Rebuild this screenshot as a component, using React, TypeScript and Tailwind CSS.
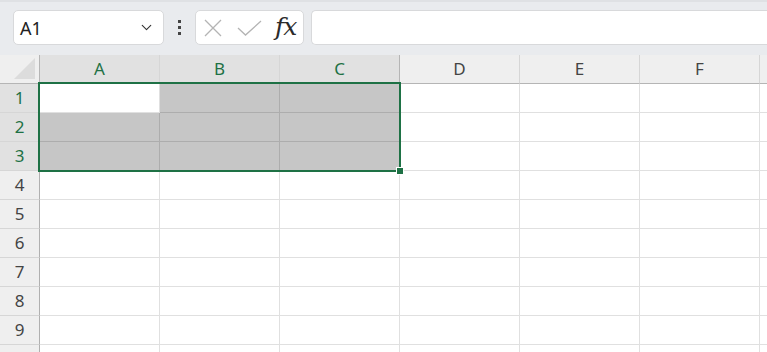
import { ChevronDown } from 'lucide-react';

const cols = ['A', 'B', 'C', 'D', 'E', 'F'];
const rows = [1, 2, 3, 4, 5, 6, 7, 8, 9];

const isSel = (r: number, c: number) => r <= 3 && c <= 2;

const App = () => {
  return (
    <div className="w-[767px] h-[352px] overflow-hidden bg-white font-['Noto_Sans',sans-serif]">
      {/* Toolbar */}
      <div className="h-[55px] bg-[#e9ebee] border-t-2 border-[#dfe1e4] flex items-start pt-[8px] pl-[13px]">
        <div className="w-[151px] h-[35px] bg-white rounded-[5px] border border-[#d8d9db] flex items-center pl-[6px] pr-[8px]">
          <span className="text-[18px] text-[#222] leading-none">A1</span>
          <ChevronDown className="ml-auto w-[17px] h-[17px] text-[#333]" strokeWidth={1.6} />
        </div>
        <div className="w-[31px] h-[35px] flex flex-col items-center justify-center gap-[3px]">
          <span className="w-[3px] h-[3px] bg-[#444]" />
          <span className="w-[3px] h-[3px] bg-[#444]" />
          <span className="w-[3px] h-[3px] bg-[#444]" />
        </div>
        <div className="w-[109px] h-[35px] bg-white rounded-[5px] border border-[#d8d9db] flex items-center pl-[8px]">
          <svg width="18" height="18" viewBox="0 0 18 18" className="shrink-0">
            <path d="M1 1 L17 17 M17 1 L1 17" stroke="#b4b4b4" strokeWidth="1.3" fill="none" />
          </svg>
          <svg width="25" height="16" viewBox="0 0 25 16" className="ml-[15px] shrink-0">
            <path d="M1 8 L8.5 15 L24 1" stroke="#b4b4b4" strokeWidth="1.3" fill="none" />
          </svg>
          <span className="ml-[13px] text-[25px] italic text-[#2b2b2b] font-['DejaVu_Serif',serif] leading-none -mt-[3px] tracking-[-1px]">
            fx
          </span>
        </div>
        <div className="ml-[7px] flex-1 h-[35px] bg-white rounded-l-[5px] border border-r-0 border-[#d8d9db]" />
      </div>

      {/* Grid */}
      <div className="relative">
        {/* Column headers */}
        <div className="flex h-[29px]">
          <div className="w-[40px] shrink-0 bg-[#efefef] border-r border-b border-[#b5b5b5] relative">
            <svg width="22" height="22" viewBox="0 0 22 22" className="absolute right-[3px] bottom-[3px]">
              <path d="M21 0 L21 21 L0 21 Z" fill="#dcdcdc" />
            </svg>
          </div>
          {cols.map((c, i) => (
            <div
              key={c}
              className={`w-[120px] shrink-0 flex items-center justify-center text-[17px] border-b ${
                i <= 2
                  ? 'bg-[#e1e1e1] text-[#1e7145] border-[#1e7145]'
                  : 'bg-[#efefef] text-[#444] border-[#b5b5b5]'
              } ${i === 2 ? 'border-r border-r-[#b5b5b5]' : 'border-r border-r-[#d6d6d6]'}`}
            >
              {c}
            </div>
          ))}
          <div className="flex-1 bg-[#efefef] border-b border-[#b5b5b5]" />
        </div>

        {/* Rows */}
        {rows.map((r) => (
          <div key={r} className="flex h-[29px]">
            <div
              className={`w-[40px] shrink-0 flex items-center justify-center text-[17px] border-r border-r-[#b0b0b0] border-b border-b-[#d6d6d6] ${
                r <= 3 ? 'bg-[#e1e1e1] text-[#1e7145]' : 'bg-[#efefef] text-[#444]'
              }`}
            >
              {r}
            </div>
            {cols.map((c, i) => {
              const active = r === 1 && i === 0;
              const sel = isSel(r, i) && !active;
              return (
                <div
                  key={c}
                  className={`w-[120px] shrink-0 border-r border-b ${
                    sel ? 'bg-[#c6c6c6] border-[#adadad]' : 'bg-white border-[#e0e0e0]'
                  }`}
                />
              );
            })}
            <div className="flex-1 border-b border-[#e0e0e0]" />
          </div>
        ))}

        {/* Partially visible next row */}
        <div className="flex h-[29px]">
          <div className="w-[40px] shrink-0 bg-[#efefef] border-r border-[#b0b0b0]" />
          {cols.map((c) => (
            <div key={c} className="w-[120px] shrink-0 border-r border-[#e0e0e0]" />
          ))}
        </div>

        {/* Selection outline */}
        <div className="absolute left-[38px] top-[27px] w-[363px] h-[90px] border-2 border-[#1e7145] pointer-events-none">
          <div className="absolute right-[-5px] bottom-[-5px] w-[8px] h-[8px] bg-[#1e7145] border border-white" />
        </div>
      </div>
    </div>
  );
};

export default App;
